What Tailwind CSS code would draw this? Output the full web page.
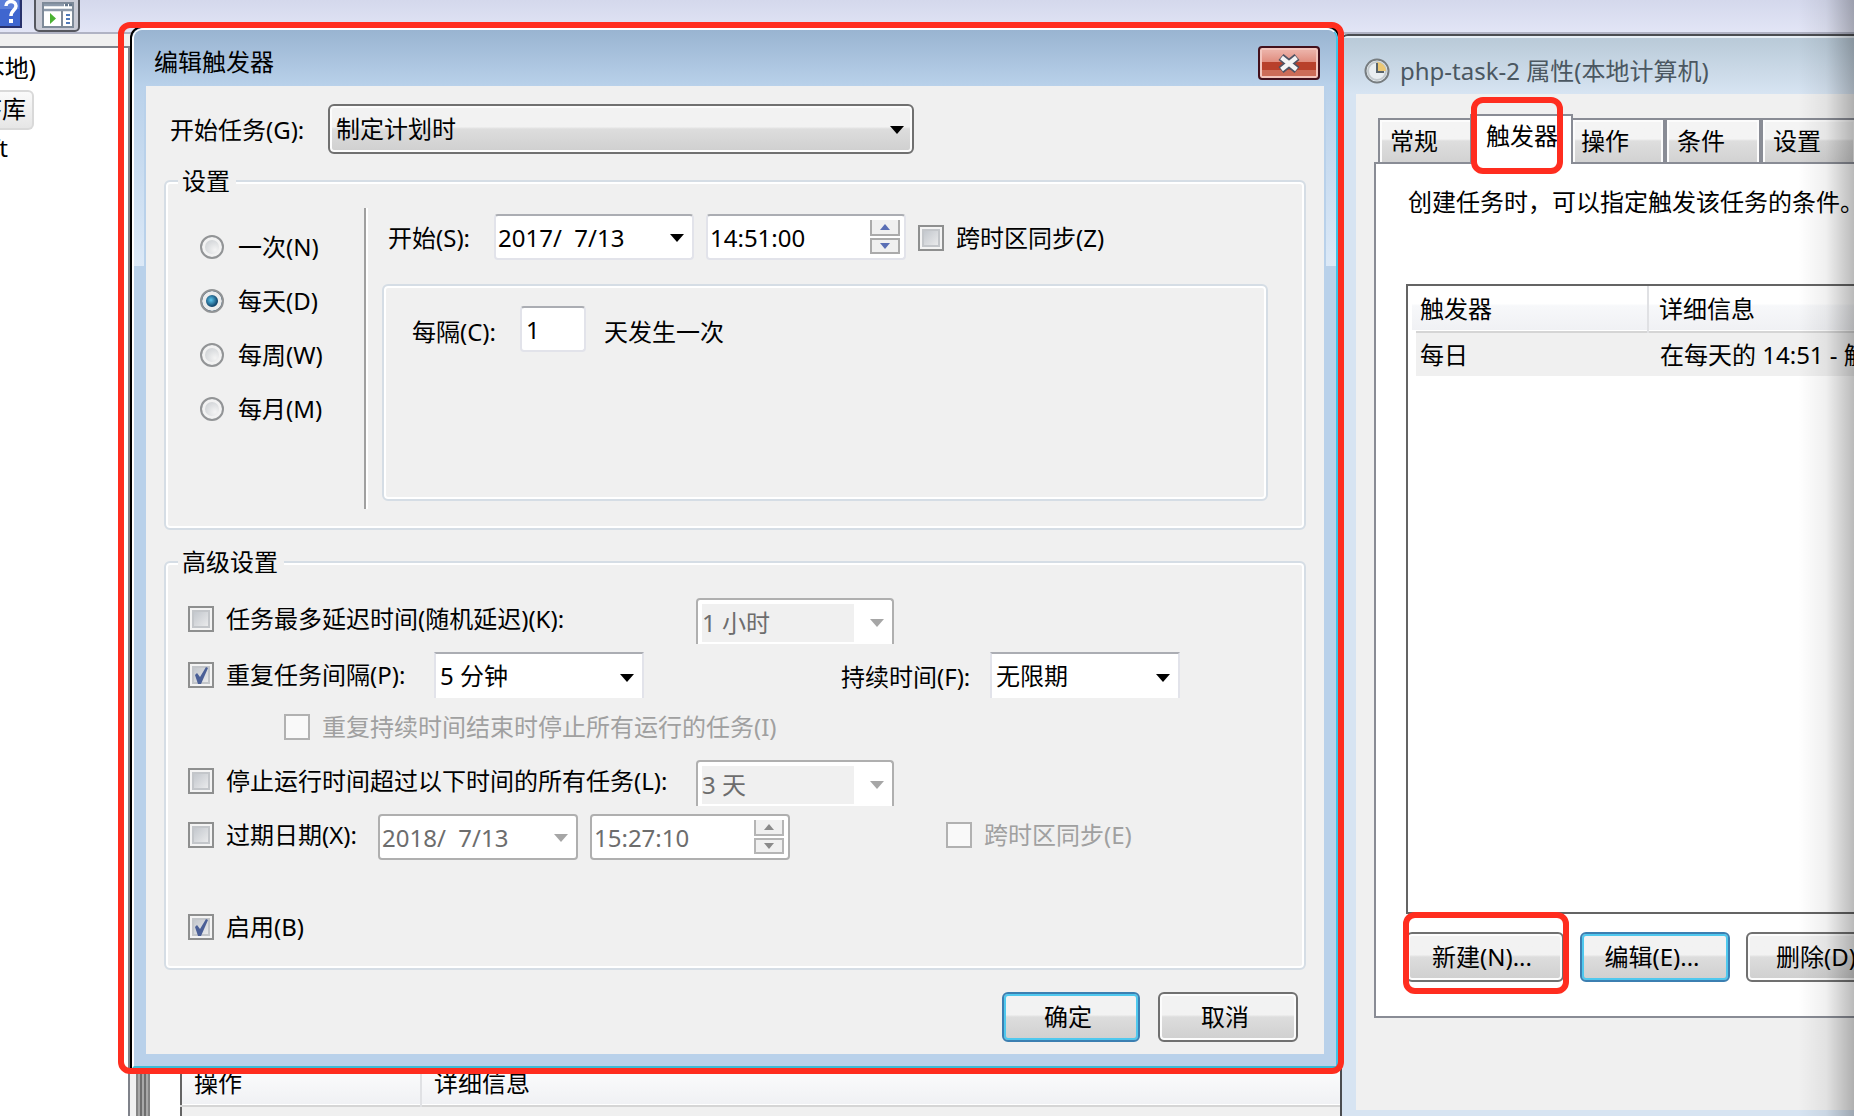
<!DOCTYPE html>
<html lang="zh-CN">

<head>
  <meta charset="UTF-8">
  <title>任务计划程序</title>
  <script src="https://cdn.jsdelivr.net/npm/@tailwindcss/browser@4"></script>
</head>

<body class="relative h-screen overflow-hidden bg-[#f0f0f0] font-['Noto_Sans','Noto_Sans_CJK_SC',sans-serif] text-2xl leading-8 text-black">

  <!-- Main window -->
  <div class="flex h-full flex-col">
    <!-- Toolbar -->
    <div class="flex h-[34px] shrink-0 items-start gap-3 border-b-2 border-[#b0b3c4] bg-linear-to-b from-[#d4d8ec] to-[#e2e5f6]">
      <button class="h-7 w-[22px] overflow-hidden" aria-label="帮助">
        <svg class="h-7 w-[22px]" viewBox="0 0 22 28">
          <rect x="-6" y="-6" width="27" height="33" fill="#3f66cf" stroke="#27306b" stroke-width="2" />
          <rect x="-4" y="-4" width="23" height="13" fill="#6f8fe0" opacity=".6" />
          <path d="M6 6C6 0 16 0 16 6c0 4-5 4-5 10" fill="none" stroke="#fff" stroke-width="3.5" />
          <rect x="9" y="19" width="4" height="4" fill="#fff" />
        </svg>
      </button>
      <button class="h-8 w-[46px] overflow-hidden" aria-label="显示/隐藏操作窗格">
        <svg class="h-8 w-[46px]" viewBox="0 0 46 32">
          <rect x="1" y="-8" width="44" height="39" rx="4" fill="#c9cbd6" stroke="#55575f" stroke-width="2" />
          <rect x="9" y="3" width="30" height="24" fill="#fff" stroke="#7e8a99" stroke-width="2" />
          <path d="M10 5h20M10 10h28" stroke="#8d9aab" stroke-width="2.5" />
          <path d="M31 5h3M35 5h3" stroke="#66778c" stroke-width="2.5" />
          <path d="M28 11v16" stroke="#7e8a99" stroke-width="2" />
          <path d="M16 13v11l6-5.5z" fill="#4bb233" />
          <path d="M32 15h4M32 19h4M32 23h4" stroke="#4f79b8" stroke-width="2" />
        </svg>
      </button>
    </div>

    <div class="flex min-h-0 flex-1 pt-3">
      <!-- Tree -->
      <div class="w-[130px] shrink-0 border-t-2 border-r-2 border-[#7f828a] bg-white pt-1">
        <div class="flex h-8 w-9 justify-end overflow-hidden whitespace-nowrap">任务计划程序(本地)</div>
        <div class="mt-1.5 flex h-10 w-[34px] items-center justify-end overflow-hidden rounded-r-md border-2 border-l-0 border-[#d9d9d9] bg-linear-to-b from-[#fafafa] to-[#e6e6e6] pr-1.5 pb-0.5 whitespace-nowrap">任务计划程序库</div>
        <div class="mt-0.5 flex h-8 w-2 justify-end overflow-hidden whitespace-nowrap">Microsoft</div>
      </div>
      <!-- Splitter -->
      <div class="ml-1.5 flex w-3.5 shrink-0 justify-between border-x-2 border-[#848484] bg-[#a8a8a8] px-0.5">
        <div class="w-0.5 bg-[#6e6e6e]"></div>
        <div class="w-0.5 bg-[#6e6e6e]"></div>
      </div>
      <!-- Actions list -->
      <div class="flex flex-1 flex-col justify-end bg-white pl-[30px]">
        <table class="w-full table-fixed border-l-2 border-[#646464] bg-[#f0f0f0] text-left">
          <thead>
            <tr class="h-[46px] border-b-2 border-[#d5d5d5] bg-linear-to-b from-white to-[#f0f1f4]">
              <th class="w-[240px] border-r-2 border-[#e0e1e4] pl-3 font-normal">操作</th>
              <th class="pl-3 font-normal">详细信息</th>
            </tr>
          </thead>
          <tbody>
            <tr class="h-2.5">
              <td></td>
              <td></td>
            </tr>
          </tbody>
        </table>
      </div>
    </div>
  </div>

  <!-- Properties dialog -->
  <section class="absolute top-[34px] right-0 bottom-0 left-[1340px] flex flex-col overflow-hidden rounded-tl-lg border-t-2 border-l-2 border-[#4a4c50] bg-[#d7e4f2]">
    <div class="flex h-[58px] shrink-0 items-center gap-2.5 border-t-2 border-[#e6eef5] bg-linear-to-b from-[#b9cad8] to-[#d7e4f2] pt-4 pb-1.5 pl-[22px]">
      <svg class="size-[26px]" viewBox="0 0 26 26">
        <circle cx="13" cy="13" r="11.5" fill="#e9eef1" stroke="#777d80" stroke-width="2" />
        <circle cx="13" cy="13" r="9" fill="none" stroke="#c3cace" stroke-width="2" />
        <path d="M13 13V4a9 9 0 0 1 9 9z" fill="#ecc873" />
        <path d="M13 5v9h7" fill="none" stroke="#59646b" stroke-width="2" />
      </svg>
      <h2 class="whitespace-nowrap text-[#4b5761]">php-task-2 属性(本地计算机)</h2>
    </div>
    <div class="mb-1.5 ml-3.5 flex flex-1 flex-col bg-[#f0f0f0] pt-5 pl-[18px]">
      <!-- Tabs -->
      <div class="relative -mb-0.5 flex h-[50px] items-end pl-1" role="tablist">
        <button role="tab" class="h-[46px] w-24 shrink-0 border-2 border-[#898c95] bg-linear-to-b from-[#f4f4f4] from-45% via-[#dedede] via-50% to-[#d2d2d2] pl-2.5 text-left shadow-[inset_2px_2px_#fcfcfc]">常规</button>
        <button role="tab" aria-selected="true" class="-ml-1 h-[50px] w-[103px] shrink-0 border-2 border-b-0 border-[#898c95] bg-white pb-2 pl-3.5 text-left">触发器</button>
        <button role="tab" class="-ml-0.5 h-[46px] w-[94px] shrink-0 border-2 border-[#898c95] bg-linear-to-b from-[#f4f4f4] from-45% via-[#dedede] via-50% to-[#d2d2d2] pl-2 text-left shadow-[inset_2px_2px_#fcfcfc,inset_-2px_0_#fcfcfc]">操作</button>
        <button role="tab" class="h-[46px] w-24 shrink-0 border-2 border-[#898c95] bg-linear-to-b from-[#f4f4f4] from-45% via-[#dedede] via-50% to-[#d2d2d2] pl-2.5 text-left shadow-[inset_2px_2px_#fcfcfc,inset_-2px_0_#fcfcfc]">条件</button>
        <button role="tab" class="h-[46px] w-24 shrink-0 border-2 border-[#898c95] bg-linear-to-b from-[#f4f4f4] from-45% via-[#dedede] via-50% to-[#d2d2d2] pl-2.5 text-left shadow-[inset_2px_2px_#fcfcfc,inset_-2px_0_#fcfcfc]">设置</button>
      </div>
      <!-- Trigger page -->
      <div class="mb-[92px] flex flex-1 flex-col border-y-2 border-l-2 border-[#898c95] bg-white pt-[22px] pl-[30px]">
        <p class="pl-0.5 whitespace-nowrap">创建任务时，可以指定触发该任务的条件。</p>
        <div class="mt-[66px] flex-1 overflow-hidden border-y-2 border-l-2 border-[#646464]">
          <table class="w-full table-fixed text-left">
            <thead>
              <tr class="h-[46px] border-b-2 border-[#d5d5d5] bg-linear-to-b from-white from-40% via-[#f7f8fa] via-45% to-[#f0f1f4]">
                <th class="w-[236px] border-r-2 border-[#e0e1e4] pl-2 font-normal">触发器</th>
                <th class="pl-2.5 font-normal">详细信息</th>
              </tr>
            </thead>
            <tbody>
              <tr class="h-11 whitespace-nowrap">
                <td class="border-l-8 border-white bg-[#f0f0f0] pl-1">每日</td>
                <td class="overflow-hidden bg-[#f0f0f0] pl-3">在每天的 14:51 - 触发后，无限期地每隔 5 分钟 重复一次。</td>
              </tr>
            </tbody>
          </table>
        </div>
        <div class="mt-[18px] mb-[34px] flex gap-4 whitespace-nowrap">
          <button class="h-[50px] w-[158px] shrink-0 rounded-md border-2 border-[#707070] bg-linear-to-b from-[#f2f2f2] from-45% via-[#dddddd] via-50% to-[#cfcfcf] pr-1.5 shadow-[inset_0_0_0_2px_#fcfcfc]">新建(N)...</button>
          <button class="h-[50px] w-[150px] shrink-0 rounded-md border-2 border-[#3c7fb1] bg-linear-to-b from-[#f2f2f2] from-45% via-[#dddddd] via-50% to-[#cfcfcf] pr-1.5 shadow-[inset_0_0_0_2px_#4fc8ee]">编辑(E)...</button>
          <button class="h-[50px] w-[150px] shrink-0 rounded-md border-2 border-[#707070] bg-linear-to-b from-[#f2f2f2] from-45% via-[#dddddd] via-50% to-[#cfcfcf] pr-2.5 shadow-[inset_0_0_0_2px_#fcfcfc]">删除(D)</button>
        </div>
      </div>
    </div>
  </section>

  <!-- Edit trigger dialog -->
  <section class="absolute top-[26px] left-[130px] w-[1210px] rounded-t-xl border-2 border-black bg-[#b9d1ea]">
    <div class="rounded-t-xl border-2 border-t-white border-r-[#3fc5e8] border-b-[#3cbcd6] border-l-white">
      <div class="flex h-14 items-start justify-between rounded-t-lg bg-linear-to-b from-[#99b4d1] to-[#b9d1ea] pl-5 pr-4 pt-4">
        <h1>编辑触发器</h1>
        <button class="flex h-[34px] w-[62px] items-center justify-center rounded-sm border-2 border-[#43111c] bg-linear-to-b from-[#ebb0a6] from-10% via-[#e08e80] via-45% to-[#c8705f] shadow-[inset_0_0_0_2px_#f3c5bd]" aria-label="关闭">
          <svg class="h-full w-full" viewBox="0 0 58 30">
            <rect x="2" y="14" width="54" height="8" fill="#b8402b" />
            <rect x="2" y="22" width="54" height="6" fill="#cc6c58" />
            <path d="M21 9l16 13M37 9L21 22" stroke="#4e5364" stroke-width="8" />
            <path d="M21.500 9.500l15 12M36.500 9.500l-15 12" stroke="#f4f4f4" stroke-width="4.500" />
          </svg>
        </button>
      </div>

      <div class="bg-linear-to-b from-[#b9d1ea] to-[#dce9f7] bg-size-[100%_180px] bg-no-repeat px-2.5 pb-3">
        <div class="border-x-2 border-[#b9d1ea]">
        <form class="bg-[#f0f0f0] px-[18px] pt-[18px] pb-3">
          <div class="flex items-center">
            <label for="begin-task" class="w-[164px] pt-0.5 pl-1.5">开始任务(G):</label>
            <div class="relative">
              <select id="begin-task" class="h-[50px] w-[586px] appearance-none rounded-md border-2 border-[#707070] bg-linear-to-b from-[#f2f2f2] from-45% via-[#dddddd] via-50% to-[#cfcfcf] pl-1.5 shadow-[inset_0_0_0_2px_#fcfcfc]">
                <option>制定计划时</option>
              </select>
              <svg class="pointer-events-none absolute top-[22px] right-2.5 h-2 w-3.5" viewBox="0 0 14 8"><path d="M0 0h14L7 8z" /></svg>
            </div>
          </div>

          <!-- Schedule -->
          <fieldset class="mt-[11px] rounded-md border-2 border-[#d5dde5] shadow-[inset_0_0_0_2px_#fff]">
            <legend class="ml-3 bg-[#f0f0f0] px-1 pr-1.5">设置</legend>
            <div class="flex pb-[19px]">
              <div class="w-[198px] pt-6 pl-[34px]">
                <label class="flex h-[54px] items-center gap-3.5 pb-0.5">
                  <input type="radio" name="schedule" class="size-6 appearance-none rounded-full border-2 border-[#929496] bg-radial-[at_65%_65%] from-[#f4f4f4] to-[#bcc1c6] shadow-[inset_0_0_0_3px_#f2f2f2]">
                  一次(N)
                </label>
                <label class="flex h-[54px] items-center gap-3.5 pb-0.5">
                  <input type="radio" name="schedule" checked class="size-6 appearance-none rounded-full border-2 border-[#929496] bg-radial-[at_45%_45%] from-[#5cc6ee] to-[#0d3f66] to-45% shadow-[inset_0_0_0_4px_#ececec]">
                  每天(D)
                </label>
                <label class="flex h-[54px] items-center gap-3.5 pb-0.5">
                  <input type="radio" name="schedule" class="size-6 appearance-none rounded-full border-2 border-[#929496] bg-radial-[at_65%_65%] from-[#f4f4f4] to-[#bcc1c6] shadow-[inset_0_0_0_3px_#f2f2f2]">
                  每周(W)
                </label>
                <label class="flex h-[54px] items-center gap-3.5 pb-0.5">
                  <input type="radio" name="schedule" class="size-6 appearance-none rounded-full border-2 border-[#929496] bg-radial-[at_65%_65%] from-[#f4f4f4] to-[#bcc1c6] shadow-[inset_0_0_0_3px_#f2f2f2]">
                  每月(M)
                </label>
              </div>
              <div class="mt-[11px] w-1 border-r-2 border-l-2 border-r-white border-l-[#a0a0a0]"></div>
              <div class="flex flex-1 flex-col pt-[17px] pr-9 pb-2 pl-3.5">
                <div class="flex h-[46px] items-center">
                  <label for="start-date" class="w-28 pt-0.5 pl-1.5">开始(S):</label>
                  <div class="relative">
                    <input id="start-date" type="text" value="2017/  7/13" class="h-[46px] w-[200px] rounded-sm border-2 border-[#e2e3ea] border-t-[#abadb3] bg-white pl-0.5">
                    <svg class="pointer-events-none absolute top-5 right-2.5 h-2 w-3.5" viewBox="0 0 14 8"><path d="M0 0h14L7 8z" /></svg>
                  </div>
                  <div class="relative ml-3">
                    <input type="text" value="14:51:00" aria-label="开始时间" class="h-[46px] w-[200px] rounded-sm border-2 border-[#e2e3ea] border-t-[#abadb3] bg-white pl-0.5">
                    <div class="absolute top-1.5 right-1.5 flex flex-col gap-0.5">
                      <button type="button" aria-label="增加" class="flex h-4 w-[30px] items-center justify-center border-2 border-t-0 border-[#ababab] bg-[#f0f0f0]"><svg class="h-1.5 w-2.5" viewBox="0 0 10 6"><path d="M5 0l5 6H0z" fill="#5a6fb5" /></svg></button>
                      <button type="button" aria-label="减少" class="flex h-4 w-[30px] items-center justify-center border-2 border-[#ababab] bg-[#f0f0f0]"><svg class="h-1.5 w-2.5" viewBox="0 0 10 6"><path d="M0 0h10L5 6z" fill="#5a6fb5" /></svg></button>
                    </div>
                  </div>
                  <label class="ml-3 flex items-center gap-3 pt-0.5">
                    <input type="checkbox" class="size-[26px] appearance-none border-2 border-[#8e8f8f] bg-linear-to-br from-[#b9bec5] to-[#f4f4f4] shadow-[inset_0_0_0_2px_#f4f4f4,inset_0_0_0_4px_#c3c6ca]">
                    跨时区同步(Z)
                  </label>
                </div>
                <div class="mt-6 flex min-h-[217px] flex-1 items-start rounded-md border-2 border-[#d5dde5] pt-5 pl-[26px] shadow-[inset_0_0_0_2px_#fff]">
                  <label for="every-days" class="w-[110px] pt-2.5 pl-0.5">每隔(C):</label>
                  <input id="every-days" type="text" value="1" class="h-[46px] w-[66px] rounded-sm border-2 border-[#e2e3ea] border-t-[#abadb3] bg-white pl-1">
                  <span class="pt-2.5 pl-[18px]">天发生一次</span>
                </div>
              </div>
            </div>
          </fieldset>

          <!-- Advanced -->
          <fieldset class="mt-4 rounded-md border-2 border-[#d5dde5] shadow-[inset_0_0_0_2px_#fff]">
            <legend class="ml-3 bg-[#f0f0f0] px-1 pr-1.5">高级设置</legend>
            <div class="flex flex-col gap-2 pt-5 pb-[18px] pl-[22px]">
              <div class="flex h-[46px] items-center">
                <label class="flex w-[508px] items-center gap-3 pb-1">
                  <input type="checkbox" class="size-[26px] appearance-none border-2 border-[#8e8f8f] bg-linear-to-br from-[#b9bec5] to-[#f4f4f4] shadow-[inset_0_0_0_2px_#f4f4f4,inset_0_0_0_4px_#c3c6ca]">
                  任务最多延迟时间(随机延迟)(K):
                </label>
                <div class="flex h-[46px] w-[198px] items-center rounded-t-sm border-2 border-b-0 border-[#afafaf] bg-white pt-0.5 pl-1">
                  <select disabled aria-label="延迟时间" class="h-[38px] w-[152px] appearance-none bg-[#f0f0f0] text-[#6d6d6d]">
                    <option>1 小时</option>
                  </select>
                  <svg class="ml-4 h-2 w-3.5" viewBox="0 0 14 8"><path d="M0 0h14L7 8z" fill="#a6a6a6" /></svg>
                </div>
              </div>

              <div class="flex h-[46px] items-center">
                <label class="relative flex w-[246px] items-center gap-3">
                  <input type="checkbox" checked class="size-[26px] appearance-none border-2 border-[#8e8f8f] bg-linear-to-br from-[#b9bec5] to-[#f4f4f4] shadow-[inset_0_0_0_2px_#f4f4f4,inset_0_0_0_4px_#c3c6ca]">
                  <svg class="pointer-events-none absolute left-0 size-[26px]" viewBox="0 0 26 26"><path d="M7 13l2-2 3 4 6-10 2 1-7 16h-3z" fill="#4a5f97" /></svg>
                  重复任务间隔(P):
                </label>
                <div class="relative">
                  <select aria-label="重复间隔" class="h-[46px] w-[210px] appearance-none border-2 border-b-0 border-[#e2e3ea] border-t-[#abadb3] bg-white pl-1">
                    <option>5 分钟</option>
                  </select>
                  <svg class="pointer-events-none absolute top-[22px] right-2.5 h-2 w-3.5" viewBox="0 0 14 8"><path d="M0 0h14L7 8z" /></svg>
                </div>
                <label for="duration" class="ml-[197px] w-[149px] pt-1">持续时间(F):</label>
                <div class="relative">
                  <select id="duration" class="h-[46px] w-[190px] appearance-none border-2 border-b-0 border-[#e2e3ea] border-t-[#abadb3] bg-white pl-1">
                    <option>无限期</option>
                  </select>
                  <svg class="pointer-events-none absolute top-[22px] right-2.5 h-2 w-3.5" viewBox="0 0 14 8"><path d="M0 0h14L7 8z" /></svg>
                </div>
              </div>

              <div class="flex h-[46px] items-center pl-24">
                <label class="flex items-center gap-3 pb-1 text-[#a0a0a0]">
                  <input type="checkbox" disabled class="size-[26px] appearance-none border-2 border-[#b1b1b1] bg-[#f9f9f9]">
                  重复持续时间结束时停止所有运行的任务(I)
                </label>
              </div>

              <div class="flex h-[46px] items-center">
                <label class="flex w-[508px] items-center gap-3 pb-1">
                  <input type="checkbox" class="size-[26px] appearance-none border-2 border-[#8e8f8f] bg-linear-to-br from-[#b9bec5] to-[#f4f4f4] shadow-[inset_0_0_0_2px_#f4f4f4,inset_0_0_0_4px_#c3c6ca]">
                  停止运行时间超过以下时间的所有任务(L):
                </label>
                <div class="flex h-[46px] w-[198px] items-center rounded-t-sm border-2 border-b-0 border-[#afafaf] bg-white pt-0.5 pl-1">
                  <select disabled aria-label="运行时间上限" class="h-[38px] w-[152px] appearance-none bg-[#f0f0f0] text-[#6d6d6d]">
                    <option>3 天</option>
                  </select>
                  <svg class="ml-4 h-2 w-3.5" viewBox="0 0 14 8"><path d="M0 0h14L7 8z" fill="#a6a6a6" /></svg>
                </div>
              </div>

              <div class="flex h-[46px] items-center">
                <label class="flex w-[190px] items-center gap-3 pb-1">
                  <input type="checkbox" class="size-[26px] appearance-none border-2 border-[#8e8f8f] bg-linear-to-br from-[#b9bec5] to-[#f4f4f4] shadow-[inset_0_0_0_2px_#f4f4f4,inset_0_0_0_4px_#c3c6ca]">
                  过期日期(X):
                </label>
                <div class="relative">
                  <input type="text" disabled value="2018/  7/13" aria-label="过期日期" class="h-[46px] w-[200px] rounded-sm border-2 border-[#afafaf] bg-white pl-0.5 text-[#6d6d6d]">
                  <svg class="pointer-events-none absolute top-5 right-2.5 h-2 w-3.5" viewBox="0 0 14 8"><path d="M0 0h14L7 8z" fill="#a6a6a6" /></svg>
                </div>
                <div class="relative ml-3">
                  <input type="text" disabled value="15:27:10" aria-label="过期时间" class="h-[46px] w-[200px] rounded-sm border-2 border-[#afafaf] bg-white pl-0.5 text-[#6d6d6d]">
                  <div class="absolute top-1.5 right-1.5 flex flex-col gap-0.5">
                    <button type="button" disabled aria-label="增加" class="flex h-4 w-[30px] items-center justify-center border-2 border-t-0 border-[#b5b5b5] bg-[#f0f0f0]"><svg class="h-1.5 w-2.5" viewBox="0 0 10 6"><path d="M5 0l5 6H0z" fill="#8a8a8a" /></svg></button>
                    <button type="button" disabled aria-label="减少" class="flex h-4 w-[30px] items-center justify-center border-2 border-[#b5b5b5] bg-[#f0f0f0]"><svg class="h-1.5 w-2.5" viewBox="0 0 10 6"><path d="M0 0h10L5 6z" fill="#8a8a8a" /></svg></button>
                  </div>
                </div>
                <label class="ml-[156px] flex items-center gap-3 pb-1 text-[#a0a0a0]">
                  <input type="checkbox" disabled class="size-[26px] appearance-none border-2 border-[#b1b1b1] bg-[#f9f9f9]">
                  跨时区同步(E)
                </label>
              </div>

              <div class="mt-9 flex h-[46px] items-center">
                <label class="relative flex items-center gap-3">
                  <input type="checkbox" checked class="size-[26px] appearance-none border-2 border-[#8e8f8f] bg-linear-to-br from-[#b9bec5] to-[#f4f4f4] shadow-[inset_0_0_0_2px_#f4f4f4,inset_0_0_0_4px_#c3c6ca]">
                  <svg class="pointer-events-none absolute left-0 size-[26px]" viewBox="0 0 26 26"><path d="M7 13l2-2 3 4 6-10 2 1-7 16h-3z" fill="#4a5f97" /></svg>
                  启用(B)
                </label>
              </div>
            </div>
          </fieldset>

          <div class="mt-[22px] mr-2 flex justify-end gap-[18px]">
            <button type="submit" class="h-[50px] w-[138px] rounded-md border-2 border-[#3c7fb1] bg-linear-to-b from-[#f2f2f2] from-45% via-[#dddddd] via-50% to-[#cfcfcf] pr-1.5 shadow-[inset_0_0_0_2px_#4fc8ee]">确定</button>
            <button type="button" class="h-[50px] w-[140px] rounded-md border-2 border-[#707070] bg-linear-to-b from-[#f2f2f2] from-45% via-[#dddddd] via-50% to-[#cfcfcf] pr-1.5 shadow-[inset_0_0_0_2px_#fcfcfc]">取消</button>
          </div>
        </form>
        </div>
      </div>
    </div>
  </section>

  <!-- Shade on the right edge -->
  <div class="pointer-events-none absolute inset-y-0 right-0 w-14 bg-linear-to-r from-transparent via-black/6 to-black/27"></div>

  <!-- Highlight boxes -->
  <div class="pointer-events-none absolute top-[22px] left-[118px] h-[1052px] w-[1226px] rounded-xl border-6 border-[#ff2d1f]"></div>
  <div class="pointer-events-none absolute top-[97px] left-[1471px] h-[77px] w-[92px] rounded-xl border-6 border-[#ff2d1f]"></div>
  <div class="pointer-events-none absolute top-[912px] left-[1403px] h-[82px] w-[166px] rounded-xl border-6 border-[#ff2d1f]"></div>
</body>

</html>
